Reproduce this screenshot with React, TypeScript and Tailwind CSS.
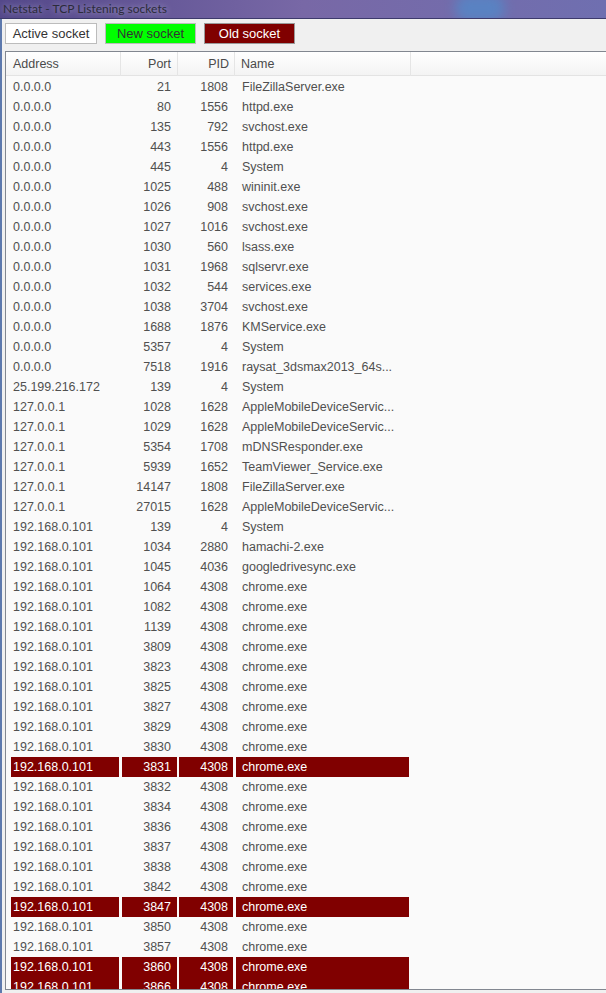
import React from "react";

type Sock = { addr: string; port: number; pid: number; name: string; old?: boolean };

const rows: Sock[] = [
  { addr: "0.0.0.0", port: 21, pid: 1808, name: "FileZillaServer.exe" },
  { addr: "0.0.0.0", port: 80, pid: 1556, name: "httpd.exe" },
  { addr: "0.0.0.0", port: 135, pid: 792, name: "svchost.exe" },
  { addr: "0.0.0.0", port: 443, pid: 1556, name: "httpd.exe" },
  { addr: "0.0.0.0", port: 445, pid: 4, name: "System" },
  { addr: "0.0.0.0", port: 1025, pid: 488, name: "wininit.exe" },
  { addr: "0.0.0.0", port: 1026, pid: 908, name: "svchost.exe" },
  { addr: "0.0.0.0", port: 1027, pid: 1016, name: "svchost.exe" },
  { addr: "0.0.0.0", port: 1030, pid: 560, name: "lsass.exe" },
  { addr: "0.0.0.0", port: 1031, pid: 1968, name: "sqlservr.exe" },
  { addr: "0.0.0.0", port: 1032, pid: 544, name: "services.exe" },
  { addr: "0.0.0.0", port: 1038, pid: 3704, name: "svchost.exe" },
  { addr: "0.0.0.0", port: 1688, pid: 1876, name: "KMService.exe" },
  { addr: "0.0.0.0", port: 5357, pid: 4, name: "System" },
  { addr: "0.0.0.0", port: 7518, pid: 1916, name: "raysat_3dsmax2013_64s..." },
  { addr: "25.199.216.172", port: 139, pid: 4, name: "System" },
  { addr: "127.0.0.1", port: 1028, pid: 1628, name: "AppleMobileDeviceServic..." },
  { addr: "127.0.0.1", port: 1029, pid: 1628, name: "AppleMobileDeviceServic..." },
  { addr: "127.0.0.1", port: 5354, pid: 1708, name: "mDNSResponder.exe" },
  { addr: "127.0.0.1", port: 5939, pid: 1652, name: "TeamViewer_Service.exe" },
  { addr: "127.0.0.1", port: 14147, pid: 1808, name: "FileZillaServer.exe" },
  { addr: "127.0.0.1", port: 27015, pid: 1628, name: "AppleMobileDeviceServic..." },
  { addr: "192.168.0.101", port: 139, pid: 4, name: "System" },
  { addr: "192.168.0.101", port: 1034, pid: 2880, name: "hamachi-2.exe" },
  { addr: "192.168.0.101", port: 1045, pid: 4036, name: "googledrivesync.exe" },
  ...[1064, 1082, 1139, 3809, 3823, 3825, 3827, 3829, 3830, 3831, 3832, 3834, 3836, 3837, 3838, 3842, 3847, 3850, 3857, 3860, 3866].map(
    (port) => ({
      addr: "192.168.0.101",
      port,
      pid: 4308,
      name: "chrome.exe",
      old: [3831, 3847, 3860, 3866].includes(port),
    })
  ),
];

const font = { fontFamily: '"Liberation Sans", Arial, sans-serif' };

function Row({ r }: { r: Sock }) {
  const cell = r.old ? "bg-[#800000] text-white" : "text-[#505050]";
  return (
    <div className="grid h-[20px] grid-cols-[115px_57px_57px_176px] text-[12.5px] leading-[20px]">
      <div className={`ml-[5px] mr-[2px] truncate pl-[2px] ${cell}`}>{r.addr}</div>
      <div className={`ml-px mr-px pr-[6px] text-right ${cell}`}>{r.port}</div>
      <div className={`ml-px mr-[2px] pr-[5px] text-right ${cell}`}>{r.pid}</div>
      <div className={`ml-px mr-[2px] truncate pl-[6px] ${cell}`}>{r.name}</div>
    </div>
  );
}

export default function App() {
  return (
    <div className="flex h-[993px] w-[606px] flex-col overflow-hidden bg-[#f0f0f0]" style={font}>
      {/* caption bar */}
      <div className="relative h-[19px] shrink-0 overflow-hidden border-b border-[#3d3a6c] bg-gradient-to-r from-[#54488a] via-[#7868a6] to-[#6f6fb0]">
        <div className="absolute left-[455px] top-[-6px] h-[28px] w-[50px] rounded-full bg-[#4f8ccc] opacity-70 blur-[6px]" />
        <span
          className="relative block pl-[3px] text-[12px] leading-[17px] text-[#2b2b3a]"
          style={{ fontFamily: 'Lato, "Open Sans", sans-serif', textShadow: "0 0 6px rgba(230,230,255,0.6)" }}
        >
          Netstat - TCP Listening sockets
        </span>
      </div>

      <div className="flex min-h-0 flex-1 border-l-[2px] border-[#5d79ad]">
        <div className="flex min-h-0 flex-1 flex-col pl-[3px]">
          {/* legend buttons */}
          <div className="flex h-[32px] shrink-0 items-start gap-[8px] pt-[4px] text-[13px]">
            <div className="flex h-[21px] w-[92px] items-center justify-center border border-[#bcbcbc] bg-white text-[#333]">
              Active socket
            </div>
            <div className="flex h-[21px] w-[91px] items-center justify-center border border-[#bcbcbc] bg-[#00ff00] text-[#333]">
              New socket
            </div>
            <div className="flex h-[21px] w-[91px] items-center justify-center border border-[#9a9a9a] bg-[#800000] text-white">
              Old socket
            </div>
          </div>

          {/* list view */}
          <div className="mb-[3px] flex min-h-0 flex-1 flex-col overflow-hidden border-b border-l border-t border-[#828790] bg-[#fafafa]">
            <div className="grid h-[24px] shrink-0 grid-cols-[115px_57px_57px_176px] border-b border-[#e3e3e3] bg-gradient-to-b from-[#ffffff] to-[#f3f3f3] text-[12.5px] leading-[24px] text-[#4a4a4a]">
              <div className="border-r border-[#e5e5e5] pl-[7px]">Address</div>
              <div className="border-r border-[#e5e5e5] pr-[6px] text-right">Port</div>
              <div className="border-r border-[#e5e5e5] pr-[5px] text-right">PID</div>
              <div className="border-r border-[#e5e5e5] pl-[6px]">Name</div>
            </div>
            <div className="flex flex-col pt-px">
              {rows.map((r) => (
                <Row key={r.addr + r.port} r={r} />
              ))}
            </div>
          </div>
        </div>
      </div>
    </div>
  );
}
